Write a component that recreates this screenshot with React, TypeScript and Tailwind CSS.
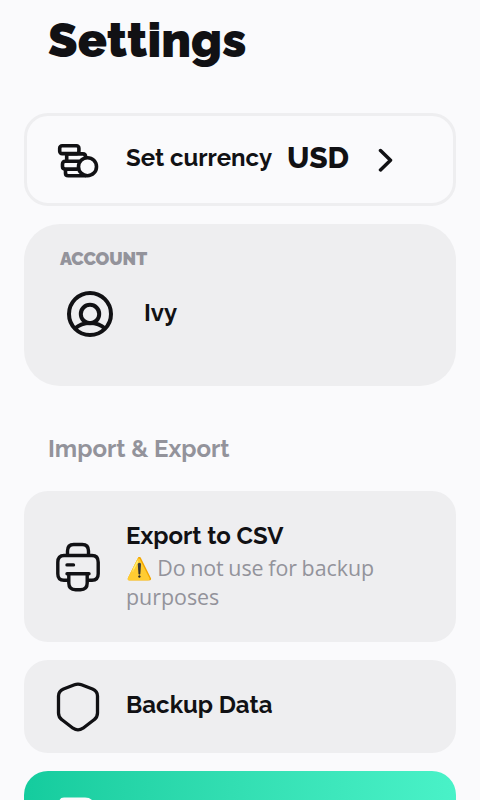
import type { ReactNode } from "react";

function CoinsIcon() {
  return (
    <svg className="h-9 w-[42px] shrink-0" viewBox="0 0 42 36" fill="none" stroke="#111114" strokeWidth="3.6" strokeLinejoin="round">
      <rect x="2.7" y="3.8" width="19.2" height="7.8" rx="2.4" />
      <path d="M9.7 11.5v7M21.5 11.9h4.3q2.8 0 2.8 3.2M9.5 11.9H22" />
      <path d="M22.5 19.2H8.3q-2.8 0-2.8 2.8v2.5q0 2.6 2.8 2.6h12.5" />
      <path d="M8.5 27.3v4q0 2.5 2.8 2.5h18" />
      <circle cx="30.5" cy="24.7" r="9" fill="#fafafc" />
    </svg>
  );
}

function UserIcon() {
  return (
    <svg className="size-12 shrink-0" viewBox="0 0 48 48" fill="none" stroke="#111114" strokeWidth="4">
      <circle cx="24" cy="24" r="21" />
      <circle cx="24" cy="24" r="9.2" />
      <path d="M9 38.5C17 31 31 31 39 38.5" />
    </svg>
  );
}

function PrinterIcon() {
  return (
    <svg className="h-[50px] w-11 shrink-0" viewBox="0 0 44 50" fill="none" stroke="#111114" strokeWidth="3.4" strokeLinecap="round" strokeLinejoin="round">
      <path d="M11.5 13V9q0-6.5 6.3-6.5h8.4Q32.5 2.5 32.5 9v4" />
      <path d="M11.5 38.2H8q-6.2 0-6.2-6.5V20.2q0-6.7 6.2-6.7h28q6.2 0 6.2 6.7v11.5q0 6.5-6.2 6.5h-3.5" />
      <path d="M11 22.9h6.5M11 31.7h22" />
      <path d="M12.8 32v9q0 6.7 6.8 6.7h4.8q6.8 0 6.8-6.7v-9" />
    </svg>
  );
}

function ShieldIcon() {
  return (
    <svg className="h-[50px] w-11 shrink-0" viewBox="0 0 44 50" fill="none" stroke="#111114" strokeWidth="3.3" strokeLinejoin="round">
      <path d="M18.5 2.8Q22 1.4 25.5 2.8L36.5 7Q41.5 9.2 41.5 14v17q0 4.3-3.5 6.8L27 46.2q-5 3.2-10 0L6 37.8Q2.5 35.3 2.5 31V14q0-4.8 5-7Z" />
    </svg>
  );
}

function Title({ children }: { children: ReactNode }) {
  return <span className="block text-2xl leading-7 font-bold whitespace-nowrap">{children}</span>;
}

export default function App() {
  return (
    <main className="h-[800px] w-[480px] overflow-hidden bg-[#fafafc] px-6 font-[Raleway,Lato,sans-serif] text-[#111114]">
      <h1 className="h-[113px] pt-[11px] pl-6 text-[48px] leading-[58px] font-black tracking-[0.1px]">Settings</h1>

      <button className="flex h-[93px] w-full items-center rounded-[24px] border-[3px] border-[#eeeef0] pl-[30px] text-left">
        <CoinsIcon />
        <div className="ml-[27px] w-[161px] pb-1"><Title>Set currency</Title></div>
        <span className="w-[91px] pb-1 text-[30px] leading-8 font-extrabold tracking-[-0.2px]">USD</span>
        <svg className="h-6 w-4" viewBox="0 0 16 24" fill="none" stroke="#111114" strokeWidth="3.5" strokeLinecap="round" strokeLinejoin="round">
          <path d="m2.5 2.5 10 9.7-10 9.7" />
        </svg>
      </button>

      <section className="mt-[18px] h-[162px] rounded-[36px] bg-[#eeeef0] pt-6 pl-9">
        <h2 className="text-lg leading-[22px] font-black tracking-[-0.12px] text-[#93939b]">ACCOUNT</h2>
        <div className="mt-5 ml-1.5 flex items-center">
          <UserIcon />
          <div className="ml-[30px] pb-0.5"><Title>Ivy</Title></div>
        </div>
      </section>

      <h2 className="h-[105px] pt-[49px] pl-6 text-2xl leading-7 font-bold text-[#93939b]">Import &amp; Export</h2>

      <button className="flex h-[151px] w-full items-center rounded-[24px] bg-[#eeeef0] pl-8 text-left">
        <PrinterIcon />
        <div className="ml-[26px] w-[270px]">
          <Title>Export to CSV</Title>
          <p className="mt-[3px] mb-px font-['Open_Sans','Noto_Color_Emoji',sans-serif] text-[21.4px] leading-[29px] [word-spacing:-1px] text-[#93939b]">⚠️ Do not use for backup purposes</p>
        </div>
      </button>

      <button className="mt-[18px] flex h-[93px] w-full items-center rounded-[24px] bg-[#eeeef0] pl-8 text-left">
        <ShieldIcon />
        <div className="ml-[26px] pb-1"><Title>Backup Data</Title></div>
      </button>

      <div className="mt-[18px] h-[93px] rounded-[24px] bg-linear-to-r from-[#14cc9e] to-[#49f2c8] pt-[26px] pl-[35px]">
        <svg className="h-12 w-9" viewBox="0 0 36 48" fill="#fafafc">
          <path d="M5 0.6H26Q31 0.6 34 4V41Q34 47 28 47H6Q0 47 0 41V6Q0 0.6 5 0.6Z" />
        </svg>
      </div>
    </main>
  );
}
